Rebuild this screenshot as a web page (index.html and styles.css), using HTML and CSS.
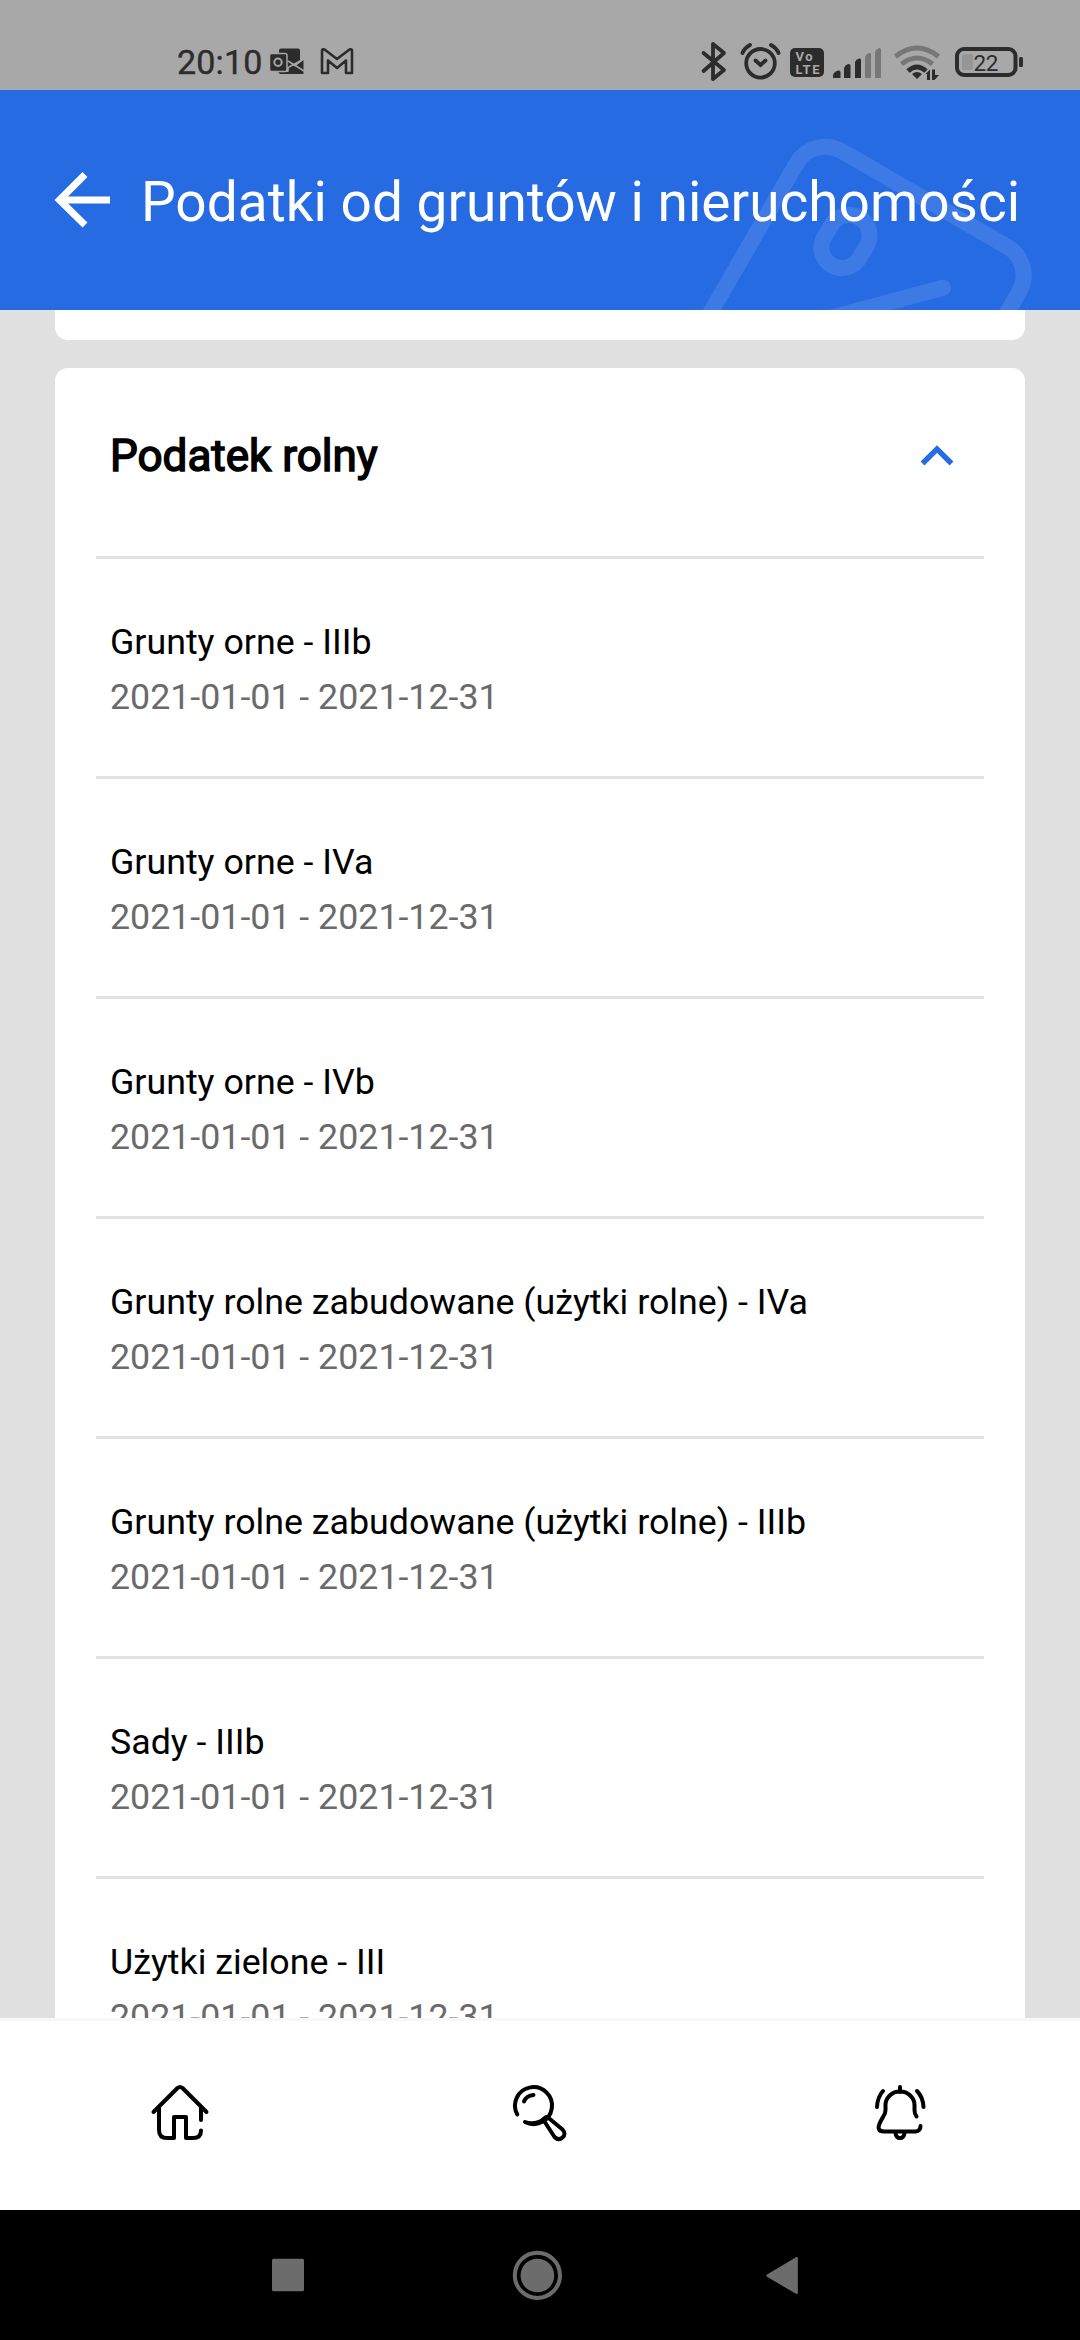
FILE: index.html
```html
<!DOCTYPE html>
<html lang="pl">
<head>
<meta charset="utf-8">
<title>Podatki od gruntów i nieruchomości</title>
<link rel="stylesheet" href="styles.css">
</head>
<body>
<div class="screen">
  <div class="status">
    <span class="clock">20:10</span>
    <svg class="notif" width="90" height="40" viewBox="268 42 90 40">
      <path d="M281 48.5h17q2 0 2 2v10l-13 7-8-2v-15q0-2 2-2zM303.500 60v14h-22q-3 0-3-2h10l1-9 5.500 3.500z" fill="#2c2c2c"/>
      <path d="M288 61l16 10M289 67l15-8" stroke="#a7a7a7" stroke-width="1.500"/>
      <rect x="269.500" y="53.500" width="17.500" height="18" rx="2" fill="#2c2c2c" stroke="#a7a7a7" stroke-width="1.500"/>
      <circle cx="278" cy="62.300" r="3.700" fill="none" stroke="#a7a7a7" stroke-width="2"/>
      <path d="M322 73V51q0-2.500 2.500-1.500L337 59l12.500-9.500q2.500-1 2.500 1.500v22h-6V60.500L337 68l-9-7.500V73z" fill="none" stroke="#2c2c2c" stroke-width="2.600" stroke-linejoin="round"/>
    </svg>
    <svg class="indicators" width="346" height="48" viewBox="698 38 346 48">
      <path d="M703.500 53l20.500 17-11 9V44l11 9-20.500 18" fill="none" stroke="#2c2c2c" stroke-width="3.800" stroke-linejoin="round" stroke-linecap="round"/>
      <g fill="none" stroke="#2c2c2c" stroke-width="3.800" stroke-linecap="round">
        <circle cx="760.500" cy="63.300" r="14.300"/>
        <path d="M742.500 53q2-5 7.500-8M778.500 53q-2-5-7.500-8M755.500 60.500l5 4.500 5-4.500"/>
      </g>
      <rect x="790" y="48" width="34" height="29" rx="5" fill="#2c2c2c"/>
      <text class="volte" x="795.500" y="61" textLength="17">Vo</text>
      <text class="volte" x="795.500" y="74" textLength="24">LTE</text>
      <g fill="#2c2c2c"><path d="M833 78v-3q1-3.500 5-4.500 2.500-.5 2.500 1.500v6zM844 78V68q1-3 4-4 2.500-.5 2.500 1.500V78zM855 78V62q1-3 4-3.500 2-.5 2 1.500v18z"/></g>
      <g fill="#777"><path d="M865 77V57q1-3 4-4 2-.5 2 1.500V77q0 1-1 1h-4q-1 0-1-1zM875 77V52q1-3 4-4 2-.5 2 1.500V77q0 1-1 1h-4q-1 0-1-1z"/></g>
      <g fill="none" stroke-width="5">
        <path d="M895.500 56.500q21.500-17 43 0M901.500 64q15.500-12 31 0" stroke="#777"/>
        <path d="M908 71q9-8 18 0" stroke="#2c2c2c"/>
      </g>
      <path d="M912 74q5-4 10 0l-5 5zM925.500 74l4.500-4.500V80h-3v-6zM932 69.500h3V75h4l-4.500 5H932z" fill="#2c2c2c"/>
      <rect x="957" y="49" width="58.500" height="26" rx="7" fill="none" stroke="#2c2c2c" stroke-width="4"/>
      <rect x="962" y="54" width="11" height="16" rx="2" fill="#969696"/>
      <rect x="1019" y="57" width="4" height="10" rx="1.500" fill="#2c2c2c"/>
      <text class="charge" x="973.500" y="70.700" textLength="25">22</text>
    </svg>
  </div>

  <header class="header">
    <svg class="tag" width="360" height="220" viewBox="700 90 360 220" fill="none" stroke="#3d7ae6" stroke-width="16">
      <path d="M702 327.300L796.700 163.200A33 33 0 0 1 841.800 151.200L1007.100 246.600A33 33 0 0 1 1019.200 291.700L999 326.700"/>
      <rect x="825" y="214" width="41" height="55" rx="20.500" transform="rotate(30 845.500 241.500)"/>
      <path d="M943 287.700L800 326" stroke-linecap="round"/>
    </svg>
    <svg class="back" width="56" height="58" viewBox="54 171 56 58" fill="none" stroke="#fff" stroke-width="7">
      <path d="M110 200H60M85 174.500L59.500 200L85 225"/>
    </svg>
    <h1 class="title">Podatki od gruntów i nieruchomości</h1>
  </header>

  <main class="content">
    <section class="card previous"></section>
    <section class="card taxes">
      <div class="card-head">
        <h2 class="card-title">Podatek rolny</h2>
        <svg class="chevron" width="34" height="22" viewBox="920 444 34 22"><path d="M922.500 463.500L937 449L951.500 463.500" fill="none" stroke="#276be3" stroke-width="5.400"/></svg>
      </div>
      <ul class="list">
        <li class="item"><span class="name">Grunty orne - IIIb</span><span class="date">2021-01-01 - 2021-12-31</span></li>
        <li class="item"><span class="name">Grunty orne - IVa</span><span class="date">2021-01-01 - 2021-12-31</span></li>
        <li class="item"><span class="name">Grunty orne - IVb</span><span class="date">2021-01-01 - 2021-12-31</span></li>
        <li class="item"><span class="name">Grunty rolne zabudowane (użytki rolne) - IVa</span><span class="date">2021-01-01 - 2021-12-31</span></li>
        <li class="item"><span class="name">Grunty rolne zabudowane (użytki rolne) - IIIb</span><span class="date">2021-01-01 - 2021-12-31</span></li>
        <li class="item"><span class="name">Sady - IIIb</span><span class="date">2021-01-01 - 2021-12-31</span></li>
        <li class="item"><span class="name">Użytki zielone - III</span><span class="date">2021-01-01 - 2021-12-31</span></li>
      </ul>
    </section>
  </main>

  <nav class="tabs">
    <svg width="60" height="60" viewBox="150 2082 60 60"><path d="M153.500 2112l24-24q2.500-2 5 0l24 24M159 2108v22q0 8 8 8h7v-21h12v21h7q8 0 8-7.500M201 2108v12"/></svg>
    <svg width="60" height="60" viewBox="510 2082 60 60"><path d="M517.300 2114.500A18.500 18.500 0 1 1 525 2122Q533 2125 541 2121L546 2117M524 2101.500q2.500-6 9.500-6.500M547.500 2117l15 12.500q4 4.500 0 8t-8-.5L544.500 2121.500"/></svg>
    <svg width="60" height="60" viewBox="870 2082 60 60"><path d="M900 2087v5M916.500 2116.500Q914.500 2114 914.500 2110V2105A14.500 13.500 0 0 0 885.500 2105V2110Q885.500 2114 883 2117L880.500 2121.500Q875.500 2131.500 884 2131.500H915.500Q920.500 2131 920.500 2126M895.500 2133Q896 2138 900 2138T904.500 2133M883 2091q-5.500 6-6 16M917 2091q6 6 6.500 16"/></svg>
  </nav>

  <div class="system">
    <svg width="34" height="50" viewBox="271 2250 34 50"><rect x="272" y="2258.700" width="32" height="32.500" rx="1.500"/></svg>
    <svg width="50" height="50" viewBox="510 2250 50 50"><circle cx="537.400" cy="2275.300" r="22.600" fill="none" stroke="#6c6c6c" stroke-width="4"/><circle cx="537.400" cy="2275.500" r="16.800"/></svg>
    <svg width="34" height="50" viewBox="764.500 2250 34 50"><path d="M766.500 2274.500L795.500 2257.300q1.800-.8 1.800 1v34.500q0 1.800-1.800 1L766.500 2276.800q-1.500-1.200 0-2.300z"/></svg>
  </div>
</div>
</body>
</html>
```
FILE: styles.css
```css
* { box-sizing: border-box; }
body { margin: 0; font-family: Roboto, sans-serif; }
svg { display: block; flex: none; overflow: visible; }
h1, h2, ul { margin: 0; padding: 0; font-weight: 400; list-style: none; }

.screen {
  width: 1080px;
  height: 2340px;
  display: flex;
  flex-direction: column;
  overflow: hidden;
  background: #e1e1e1;
}

.status {
  flex: none;
  height: 90px;
  padding: 38px 36px 0 177px;
  display: flex;
  align-items: flex-start;
  background: #a8a8a8;
  color: #2c2c2c;
}
.clock { width: 91px; font-size: 34px; line-height: 40px; padding-top: 4px; letter-spacing: 0.2px; white-space: nowrap; -webkit-text-stroke: 0.4px #2c2c2c; }
.notif { margin-top: 4px; }
.indicators { margin-left: auto; }
.volte { font-size: 13px; font-weight: 700; fill: #a8a8a8; }
.charge { font-size: 22.500px; fill: #2c2c2c; }

.header {
  flex: none;
  position: relative;
  height: 220px;
  padding: 0 0 0 54px;
  display: flex;
  align-items: center;
  background: #276be3;
  color: #fff;
}
.tag { position: absolute; left: 700px; top: 0; overflow: hidden; }
.back { position: relative; }
.title {
  position: relative;
  margin-left: 31px;
  padding-top: 4px;
  font-size: 55px;
  line-height: 66px;
  white-space: nowrap;
}

.content {
  flex: none;
  height: 1708px;
  padding: 0 55px;
  overflow: hidden;
}
.card { background: #fff; }
.previous { height: 30px; border-radius: 0 0 13px 13px; }
.taxes { margin-top: 27.500px; height: 1700px; border-radius: 13px 13px 0 0; padding: 0 41px; }
.card-head {
  height: 188.500px;
  padding: 0 30px 12px 14px;
  display: flex;
  align-items: center;
  justify-content: space-between;
}
.card-title { font-size: 44px; line-height: 52px; white-space: nowrap; -webkit-text-stroke: 1.500px #000; }
.chevron { margin-bottom: 2px; }
.item {
  height: 220px;
  padding: 56px 14px 0;
  border-top: 3px solid #e1e1e1;
  display: flex;
  flex-direction: column;
  font-size: 35.750px;
  line-height: 55px;
  white-space: nowrap;
}
.date { color: #6a6a6a; }

.tabs {
  flex: none;
  height: 192px;
  border-top: 3px solid #f8f8f8;
  display: grid;
  grid-template-columns: repeat(3, 1fr);
  justify-items: center;
  align-items: center;
  background: #fff;
}
.tabs svg { fill: none; stroke: #000; stroke-width: 4; stroke-linecap: round; stroke-linejoin: round; margin-bottom: 8px; }

.system {
  flex: 1;
  padding: 0 281.500px 0 271px;
  display: flex;
  justify-content: space-between;
  align-items: center;
  background: #000;
}
.system svg { fill: #6c6c6c; }
```
